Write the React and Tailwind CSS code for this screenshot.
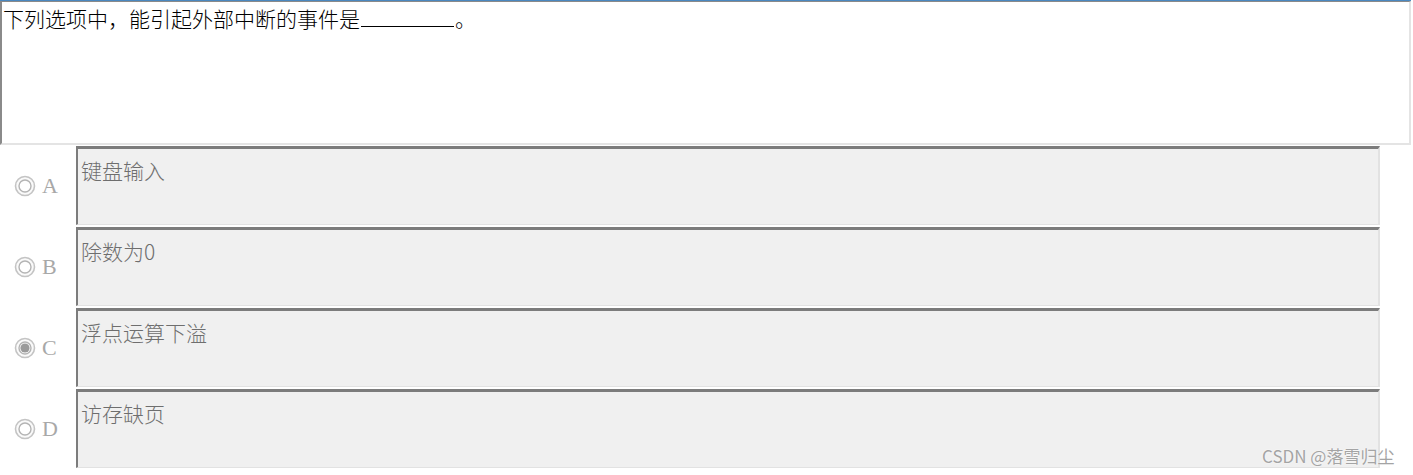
import React from "react";

const cjk = { fontFamily: '"Noto Sans CJK SC", "Noto Sans", sans-serif' };
const serif = { fontFamily: '"Liberation Serif", "DejaVu Serif", serif' };

function Radio({ checked }) {
  return (
    <svg width="22" height="22" viewBox="0 0 22 22">
      <circle cx="11" cy="11" r="9.5" fill="#fafafa" stroke="#c4c4c4" strokeWidth="1.6" />
      <circle cx="11" cy="11" r="6" fill="#ffffff" stroke="#b4b4b4" strokeWidth="1.4" />
      {checked && <circle cx="11" cy="11" r="4.6" fill="#9a9a9a" />}
    </svg>
  );
}

const options = [
  { k: "A", t: "键盘输入" },
  { k: "B", t: "除数为0" },
  { k: "C", t: "浮点运算下溢", checked: true },
  { k: "D", t: "访存缺页" },
];

export default function App() {
  return (
    <div className="relative w-[1413px] h-[475px] bg-white overflow-hidden" style={cjk}>
      <div className="w-[1411px] h-[145px] border-t border-[#4a88c0]">
        <div className="h-full border-t border-[#8a8a8a] border-l-2 border-l-[#8a8a8a] border-r-2 border-r-[#e4e4e4] border-b-2 border-b-[#e4e4e4] bg-white pl-[1px] pt-[2px]">
          <div className="text-[21px] leading-[28px] text-black whitespace-nowrap font-light">
            下列选项中，能引起外部中断的事件是
            <span className="inline-block w-[93px] h-[23px] border-b-[1.5px] border-black align-baseline mx-[1px]"></span>
            。
          </div>
        </div>
      </div>
      <div className="flex flex-col gap-[2px] mt-[1px]">
        {options.map((o) => (
          <div key={o.k} className="flex items-center h-[79px]">
            <div className="w-[76px] flex items-center pl-[14px] gap-[6px]">
              <Radio checked={o.checked} />
              <span className="text-[22px] text-[#a8a8a8] leading-none" style={serif}>
                {o.k}
              </span>
            </div>
            <div className="w-[1304px] h-full bg-[#f0f0f0] border-t-[3px] border-t-[#7c7c7c] border-l-2 border-l-[#7c7c7c] border-r-2 border-r-[#e2e2e2] border-b border-b-[#e2e2e2] pl-[3px] pt-[7px]">
              <div className="text-[21px] leading-[28px] text-[#6e6e6e] font-light">{o.t}</div>
            </div>
          </div>
        ))}
      </div>
      <div
        className="absolute left-[1262px] top-[443px] text-[17px] leading-[26px] text-[#a4a4a4] whitespace-nowrap"
        style={{ textShadow: "0 0 2px #ffffff" }}
      >
        CSDN @落雪归尘
      </div>
    </div>
  );
}
